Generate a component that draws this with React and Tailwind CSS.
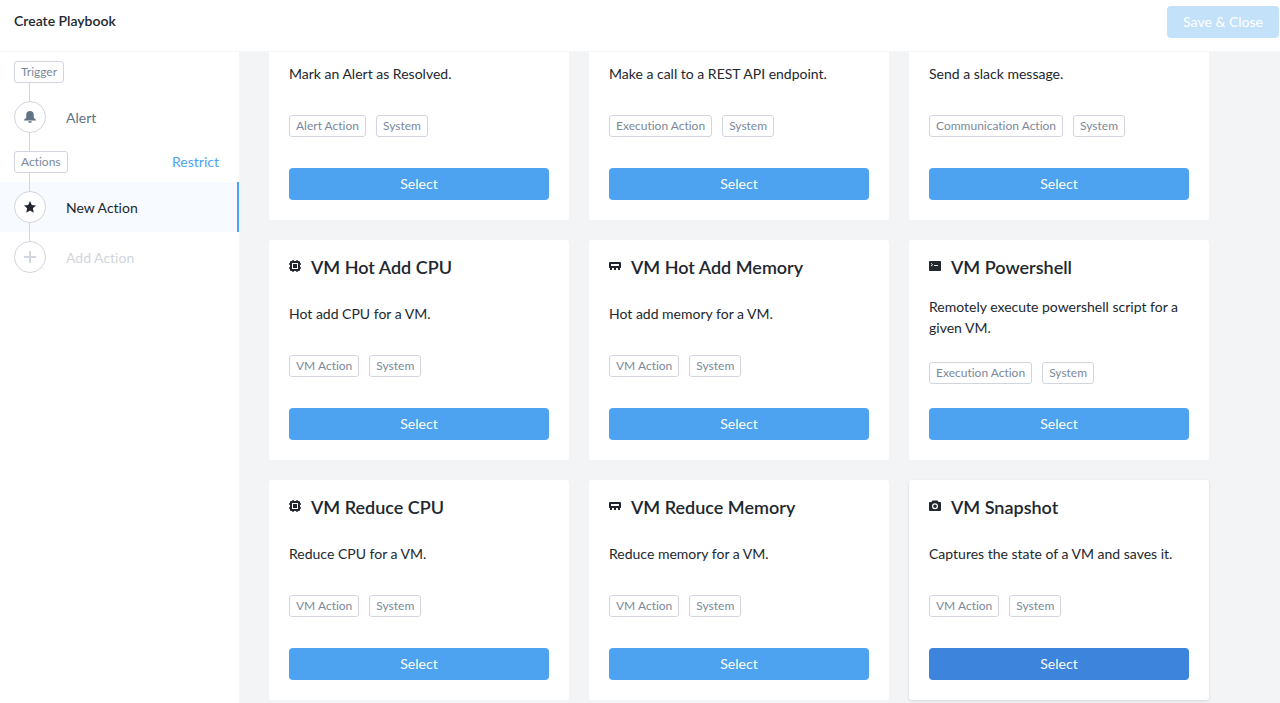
import { useLayoutEffect, useRef } from "react";

function CpuIcon() {
  return (
    <svg width="12" height="12" viewBox="0 0 12 12" fill="#22272e" aria-hidden="true">
      <path fillRule="evenodd" d="M2 1h1.300V0h1.400v1h2.600V0h1.400v1H10q1 0 1 1v1.300h1v1.400h-1v2.600h1v1.400h-1V10q0 1-1 1H8.700v1H7.300v-1H4.700v1H3.300v-1H2q-1 0-1-1V8.700H0V7.300h1V4.700H0V3.300h1V2q0-1 1-1ZM3 3v6h6V3Z" />
      <rect x="4" y="4" width="4" height="4" />
    </svg>
  );
}

function MemoryIcon() {
  return (
    <svg width="12" height="12" viewBox="0 0 12 12" fill="#22272e" aria-hidden="true">
      <path fillRule="evenodd" d="M1 2h10q1 0 1 1v5h-1v2H9V8H7v2H5V8H3v2H1V8H0V3q0-1 1-1ZM2 4v2h8V4Z" />
    </svg>
  );
}

function TerminalIcon() {
  return (
    <svg width="12" height="12" viewBox="0 0 12 12" aria-hidden="true">
      <rect y="1" width="12" height="10" rx="0.800" fill="#22272e" />
      <path d="M2 3.300l1.600 1.400L2 6.100M5 5.500h4" fill="none" stroke="#fff" strokeWidth="0.900" />
    </svg>
  );
}

function CameraIcon() {
  return (
    <svg width="12" height="12" viewBox="0 0 12 12" aria-hidden="true">
      <path d="M3.500 0.500h5l1 1.500H11q1 0 1 1v7q0 1-1 1H1q-1 0-1-1V3q0-1 1-1h1.500Z" fill="#22272e" />
      <circle cx="6" cy="6.300" r="2.400" fill="none" stroke="#fff" strokeWidth="1.200" />
    </svg>
  );
}

function BellIcon() {
  return (
    <svg width="12" height="12" viewBox="0 0 12 12" fill="#627386" aria-hidden="true">
      <path d="M6 0C3.700 0 2.200 1.600 2.200 3.800v2.700Q2 7.600 0 8.700V9.500h12v-.800Q10 7.600 9.800 6.500V3.800C9.800 1.600 8.300 0 6 0ZM4 10.300h4Q7.600 12 6 12T4 10.300Z" />
    </svg>
  );
}

function StarIcon() {
  return (
    <svg width="12" height="12" viewBox="0 0 12 12" fill="#22272e" aria-hidden="true">
      <path d="M6 0l1.800 3.900 4.200.500-3.100 2.900.800 4.400L6 9.500l-3.700 2.200.800-4.400L0 4.400l4.200-.500Z" />
    </svg>
  );
}

function PlusIcon() {
  return (
    <svg width="12" height="12" viewBox="0 0 12 12" aria-hidden="true">
      <path d="M6 0v12M0 6h12" stroke="#d1d5dd" strokeWidth="2" />
    </svg>
  );
}

const actions = [
  { text: "Mark an Alert as Resolved.", tags: ["Alert Action", "System"] },
  { text: "Make a call to a REST API endpoint.", tags: ["Execution Action", "System"] },
  { text: "Send a slack message.", tags: ["Communication Action", "System"] },
  { title: "VM Hot Add CPU", Icon: CpuIcon, text: "Hot add CPU for a VM.", tags: ["VM Action", "System"] },
  { title: "VM Hot Add Memory", Icon: MemoryIcon, text: "Hot add memory for a VM.", tags: ["VM Action", "System"] },
  { title: "VM Powershell", Icon: TerminalIcon, text: "Remotely execute powershell script for a given VM.", tags: ["Execution Action", "System"] },
  { title: "VM Reduce CPU", Icon: CpuIcon, text: "Reduce CPU for a VM.", tags: ["VM Action", "System"] },
  { title: "VM Reduce Memory", Icon: MemoryIcon, text: "Reduce memory for a VM.", tags: ["VM Action", "System"] },
  { title: "VM Snapshot", Icon: CameraIcon, text: "Captures the state of a VM and saves it.", tags: ["VM Action", "System"], active: true },
];

function Tag({ children }) {
  return (
    <span className="relative flex h-[22px] items-center rounded-[3px] border border-[#d1d5dd] bg-white px-1.5 text-[12px] text-[#7b899b]">
      {children}
    </span>
  );
}

function ActionCard({ title, Icon, text, tags, active }) {
  return (
    <article className={`flex h-[220px] flex-col justify-between rounded-[3px] bg-white p-5 ${active ? "shadow-[0_1px_3px_rgba(0,0,0,0.12)]" : ""}`}>
      <div className="flex h-3 items-center gap-2.5">
        {title && (
          <>
            <Icon />
            <h2 className="pt-px text-[18px] leading-6 font-semibold">{title}</h2>
          </>
        )}
      </div>
      <p className="text-[14px] leading-[21px]">{text}</p>
      <div className="flex gap-2.5">
        {tags.map((tag) => (
          <Tag key={tag}>{tag}</Tag>
        ))}
      </div>
      <button
        type="button"
        className={`h-8 shrink-0 rounded-[4px] pb-0.5 text-[14px] text-white ${active ? "bg-[#3d84dd]" : "bg-[#4da3ef]"}`}
      >
        Select
      </button>
    </article>
  );
}

function Step({ label, color, line, selected, children }) {
  return (
    <li className={`relative h-[50px] ${selected ? "border-r-2 border-[#4da3ef] bg-[#f7fbff]" : ""}`}>
      <span className={`absolute left-[29px] w-px bg-[#d1d5dd] ${line}`} />
      <button type="button" className="flex h-full w-full items-center gap-5 pl-3.5 text-left">
        <span className="relative flex size-8 items-center justify-center rounded-full border border-[#d1d5dd] bg-white">
          {children}
        </span>
        <span className={`text-[14px] ${color}`}>{label}</span>
      </button>
    </li>
  );
}

export default function App() {
  const list = useRef(null);

  useLayoutEffect(() => {
    list.current.scrollTop = 82;
  }, []);

  return (
    <div className="flex h-screen flex-col bg-white font-['Lato','Liberation_Sans',sans-serif] text-[#22272e] [font-variant-ligatures:none]">
      <header className="flex h-[52px] shrink-0 items-start justify-between border-b border-[#f2f4f6] pt-1.5 pr-px pl-3.5">
        <h1 className="text-[14px] leading-[30px] font-semibold">Create Playbook</h1>
        <button type="button" disabled className="h-8 rounded-[4px] bg-[#c4e1fa] px-4 pb-0.5 text-[14px] text-white">
          Save &amp; Close
        </button>
      </header>
      <div className="flex min-h-0 flex-1">
        <nav className="w-[239px] shrink-0 bg-white">
          <ul>
            <li className="relative flex h-10 items-center pl-3.5">
              <span className="absolute top-1/2 bottom-0 left-[29px] w-px bg-[#d1d5dd]" />
              <Tag>Trigger</Tag>
            </li>
            <Step label="Alert" color="text-[#627386]" line="inset-y-0">
              <BellIcon />
            </Step>
            <li className="relative flex h-10 items-center justify-between pr-5 pl-3.5">
              <span className="absolute inset-y-0 left-[29px] w-px bg-[#d1d5dd]" />
              <Tag>Actions</Tag>
              <a href="#restrict" className="pb-0.5 text-[14px] text-[#4da3ef]">Restrict</a>
            </li>
            <Step label="New Action" color="text-[#22272e]" line="inset-y-0" selected>
              <StarIcon />
            </Step>
            <Step label="Add Action" color="text-[#d1d5dd]" line="top-0 bottom-1/2">
              <PlusIcon />
            </Step>
          </ul>
        </nav>
        <main ref={list} className="min-w-0 flex-1 overflow-y-auto bg-[#f2f4f6] [scrollbar-width:none]">
          <div className="grid grid-cols-[repeat(auto-fill,300px)] gap-5 p-[30px]">
            {actions.map((action) => (
              <ActionCard key={action.text} {...action} />
            ))}
          </div>
        </main>
      </div>
    </div>
  );
}
